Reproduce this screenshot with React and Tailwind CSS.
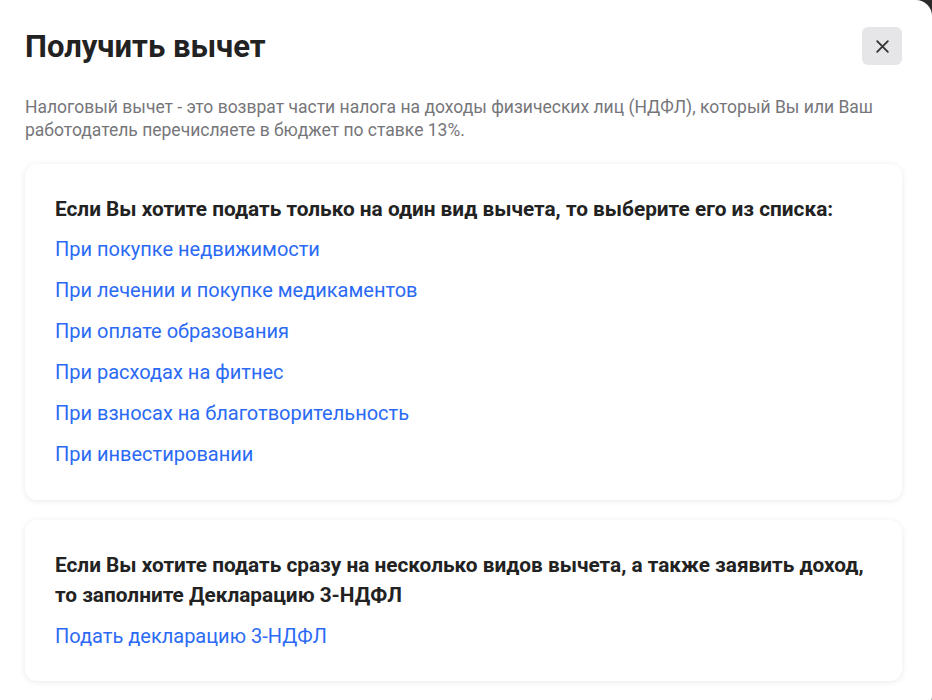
import React from 'react';

const singleLinks = [
  'При покупке недвижимости',
  'При лечении и покупке медикаментов',
  'При оплате образования',
  'При расходах на фитнес',
  'При взносах на благотворительность',
  'При инвестировании',
];

const Card = ({ children, className = '' }) => (
  <div className={`bg-white rounded-xl shadow-[0_1px_6px_rgba(0,0,0,0.09)] px-[30px] pt-[30px] ${className}`}>{children}</div>
);

const App = () => {
  return (
    <div className="w-[932px] h-[700px] bg-[#2a2a2a] overflow-hidden" style={{ fontFamily: 'Roboto, "Noto Sans", sans-serif' }}>
      <div className="w-[932px] h-[712px] bg-white rounded-tr-[16px] rounded-br-[16px] pl-[25px] pr-[30px] pt-[27px]">
        <div className="flex items-start justify-between">
          <h1 className="text-[31px] leading-[38px] font-bold text-[#222] pt-[1px]">Получить вычет</h1>
          <button className="w-[40px] h-[38px] rounded-md bg-[#e6e6e8] flex items-center justify-center">
            <svg width="15" height="15" viewBox="0 0 14 14" fill="none" stroke="#333" strokeWidth="1.7" strokeLinecap="round">
              <path d="M2 2L12 12M12 2L2 12" />
            </svg>
          </button>
        </div>

        <p className="mt-[30px] text-[17.5px] leading-[23px] text-[#76767a] pr-[20px]">
          Налоговый вычет - это возврат части налога на доходы физических лиц (НДФЛ), который Вы или Ваш работодатель
          перечисляете в бюджет по ставке 13%.
        </p>

        <div className="mt-[22px] flex flex-col gap-[20px]">
          <Card className="pb-[31px]">
            <div className="text-[20.8px] leading-[30px] font-bold text-[#222]">
              Если Вы хотите подать только на один вид вычета, то выберите его из списка:
            </div>
            <div className="mt-[10px] flex flex-col gap-[11px]">
              {singleLinks.map((l) => (
                <a key={l} href="#" className="text-[20px] leading-[30px] text-[#2a6af5] self-start">
                  {l}
                </a>
              ))}
            </div>
          </Card>

          <Card className="pb-[30px]">
            <div className="text-[20.8px] leading-[30px] font-bold text-[#222]">
              Если Вы хотите подать сразу на несколько видов вычета, а также заявить доход, то заполните Декларацию 3-НДФЛ
            </div>
            <a href="#" className="mt-[11px] block text-[20px] leading-[30px] text-[#2a6af5]">
              Подать декларацию 3-НДФЛ
            </a>
          </Card>
        </div>
      </div>
    </div>
  );
};

export default App;
